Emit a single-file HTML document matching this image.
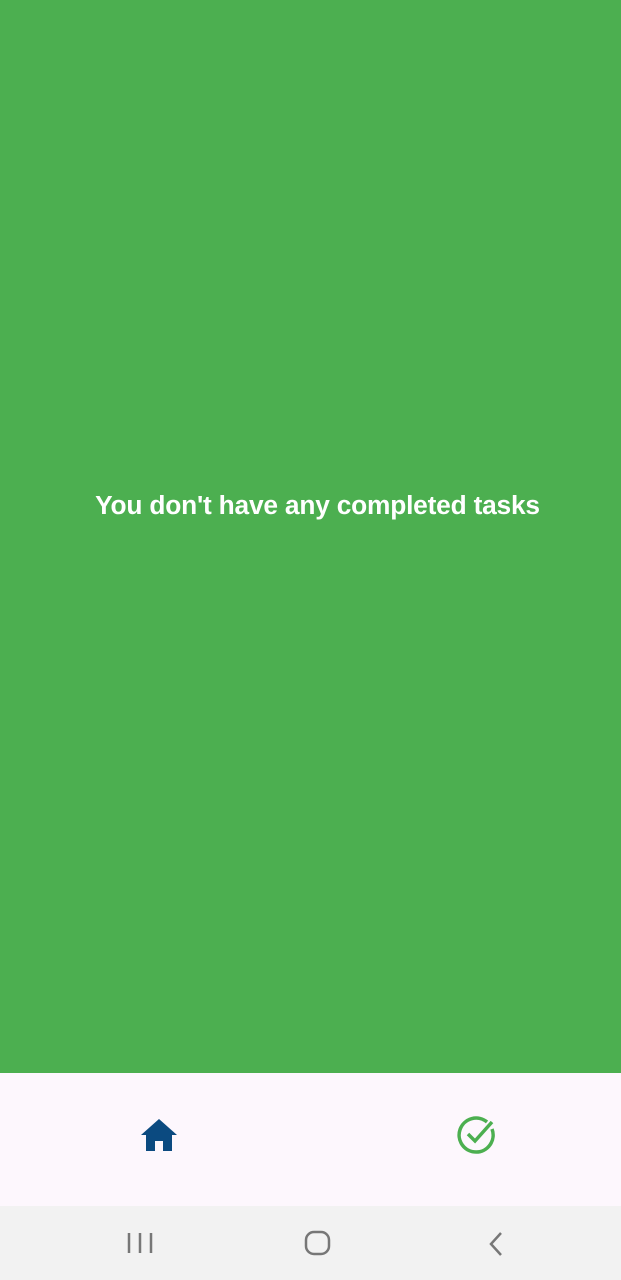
<!DOCTYPE html>
<html><head><style>
body{margin:0;width:621px;height:1280px;position:relative;overflow:hidden;font-family:"Liberation Sans",sans-serif}
.g{position:absolute;left:0;top:0;width:621px;height:1073px;background:#4caf50}
.t{position:absolute;left:0;width:635px;top:490px;text-align:center;color:#fff;font-weight:bold;font-size:26.3px;letter-spacing:-0.2px}
.n{position:absolute;left:0;top:1073px;width:621px;height:133px;background:#fdf7fd}
.s{position:absolute;left:0;top:1206px;width:621px;height:74px;background:#f2f2f2}
</style></head><body>
<div class="g"></div>
<div class="t">You don't have any completed tasks</div>
<div class="n">
<svg style="position:absolute;left:140px;top:45px" width="38" height="34" viewBox="0 0 38 34"><path d="M19 1 L37 17 L32 17 L32 33 L23 33 L23 23 L15 23 L15 33 L6 33 L6 17 L1 17 Z" fill="#0b4a80"/></svg>
<svg style="position:absolute;left:457px;top:42px" width="42" height="40" viewBox="0 0 42 40"><path d="M35 14 A17 17 0 1 1 30 7" fill="none" stroke="#4caf50" stroke-width="3.5"/><path d="M11 19 L18 26 L35 7" fill="none" stroke="#4caf50" stroke-width="3.5"/></svg>
</div>
<div class="s">
<svg style="position:absolute;left:126px;top:24px" width="28" height="26"><g stroke="#777" stroke-width="2.5"><path d="M3 3V23M14 3V23M25 3V23"/></g></svg>
<svg style="position:absolute;left:303px;top:23px" width="30" height="28"><rect x="3" y="3" width="23" height="22" rx="8" fill="none" stroke="#777" stroke-width="2.5"/></svg>
<svg style="position:absolute;left:485px;top:24px" width="20" height="28"><path d="M16 3L6 14L16 25" fill="none" stroke="#777" stroke-width="2.5"/></svg>
</div>
</body></html>
